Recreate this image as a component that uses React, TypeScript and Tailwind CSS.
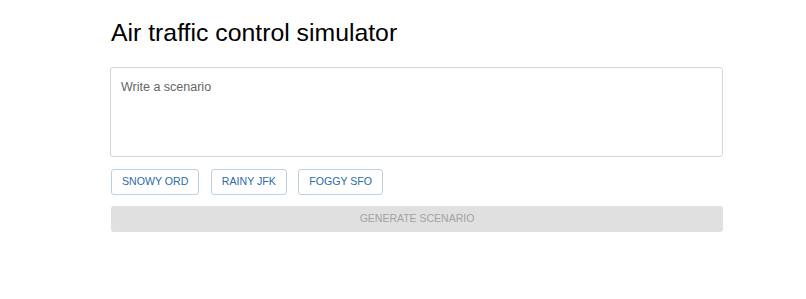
export default function App() {
  const presets = ["Snowy ORD", "Rainy JFK", "Foggy SFO"];
  return (
    <div className="min-h-[299px] bg-white font-['Liberation_Sans',Arial,sans-serif]">
      <div className="ml-[110px] w-[613px] pt-[18px]">
        <h1 className="pl-px text-[24.8px] leading-[29px] text-black">Air traffic control simulator</h1>
        <textarea
          placeholder="Write a scenario"
          className="mt-[20px] block h-[90px] w-full resize-none rounded-[3px] border border-[#d6d6d6] px-[10px] py-[12px] text-[12.5px] leading-[15px] text-[#333] outline-none placeholder:text-[#666]"
        />
        <div className="mt-[12px] flex gap-[11.5px] pl-px">
          {presets.map((p) => (
            <button
              key={p}
              type="button"
              className="h-[26px] rounded-[3px] border border-[#bcd0e6] bg-white px-[10px] text-[10.6px] uppercase text-[#2c6aa8]"
            >
              {p}
            </button>
          ))}
        </div>
        <button
          type="button"
          disabled
          className="mt-[11px] ml-px block h-[26px] w-[612px] rounded-[3px] bg-[#e0e0e0] text-[10.5px] uppercase text-[#a3a3a3]"
        >
          Generate scenario
        </button>
      </div>
    </div>
  );
}
